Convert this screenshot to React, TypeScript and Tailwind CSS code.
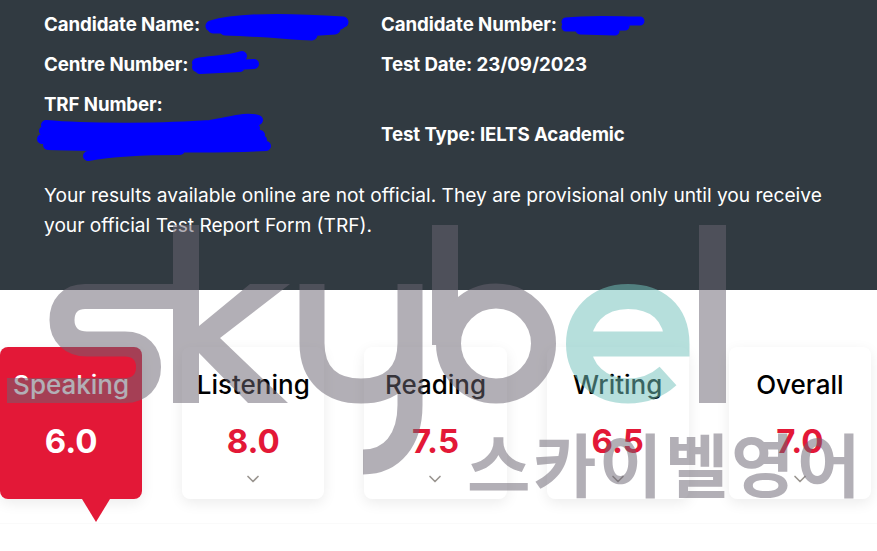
import { ChevronDown } from "lucide-react";

const scores = [
  { label: "Speaking", score: "6.0", active: true },
  { label: "Listening", score: "8.0" },
  { label: "Reading", score: "7.5" },
  { label: "Writing", score: "6.5" },
  { label: "Overall", score: "7.0" },
];

const ScoreCard = ({ label, score, active }: { label: string; score: string; active?: boolean }) => (
  <div
    className={
      active
        ? "relative flex h-[152px] flex-col items-center rounded-lg bg-[#e31837] pt-[20px] text-white shadow-[0_4px_14px_rgba(0,0,0,0.08)]"
        : "relative flex h-[152px] flex-col items-center rounded-lg bg-white pt-[20px] text-black shadow-[0_4px_14px_rgba(0,0,0,0.08)]"
    }
  >
    <div className="h-[36px] text-[26px] leading-[36px] font-medium">{label}</div>
    <div className={active ? "mt-[18px] h-[40px] text-[33px] leading-[40px] font-bold" : "mt-[18px] h-[40px] text-[33px] leading-[40px] font-bold text-[#e31837]"}>
      {score}
    </div>
    {active ? (
      <div className="absolute top-full left-[82px] h-0 w-0 border-x-[14px] border-t-[23px] border-x-transparent border-t-[#e31837]" />
    ) : (
      <ChevronDown className="mt-[8px] h-[20px] w-[20px] text-[#9a9590]" strokeWidth={2} />
    )}
  </div>
);

const Scribbles = () => (
  <svg className="absolute top-0 left-0" width="877" height="170" viewBox="0 0 877 170" fill="none" stroke="#0000ff" strokeLinecap="round" strokeLinejoin="round">
    <path d="M211 26 C240 17 300 19 343 22 M213 28 L340 24 M225 30 C260 31 290 34 312 35 M290 32 L335 29" strokeWidth="11" />
    <path d="M197 63 C210 60 228 61 242 56 M197 67 L254 64 M200 69 L240 67" strokeWidth="10" />
    <path d="M566 22 C590 19 620 21 640 21 M566 27 L625 26 M580 30 L615 31" strokeWidth="9" />
    <path d="M46 125 C90 129 170 128 210 125 C230 122 245 116 258 120 M44 131 L255 128 M42 139 C100 134 200 132 260 135 M48 145 C110 146 200 150 266 146 M88 156 C110 152 140 150 180 150 M60 137 L262 140" strokeWidth="10" />
  </svg>
);

const Watermark = () => (
  <div className="pointer-events-none absolute top-0 left-0 h-[551px] w-[877px] opacity-[0.515]">
    <svg className="absolute top-0 left-0" width="877" height="551" viewBox="0 0 877 551" fill="none">
      <g stroke="#6b6572" strokeWidth="25">
        <path d="M186 296.5 H85 C70 296.5 62 306 62 320 C62 335 72 344 87 344 H125 C140 344 148.5 353 148.5 367 C148.5 381 140 390.5 125 390.5 H7" />
        <path d="M186 225 V403" strokeWidth="26" />
        <path d="M312 284 V343 C312 375 332 391 361 391 C390 391 410 375 410 343 M410 284 V405 C410 440 392 462 363 462" />
        <path d="M445 225 V345" strokeWidth="26" />
        <circle cx="496" cy="343.5" r="47.5" />
        <path d="M712.5 225 V403" strokeWidth="27" />
      </g>
      <polygon points="199,326 250,284 290,284 220,338 288,403 248,403 199,353" fill="#6b6572" />
      <path d="M590 344 H677 C677 312 656 296.5 628 296.5 C597 296.5 578.5 318 578.5 344 C578.5 372 600 391 628 391 C645 391 657 386 668 376" stroke="#72c2bc" strokeWidth="25" />
    </svg>
    <div className="absolute top-[420px] left-[467px] whitespace-nowrap text-[69px] leading-[84px] font-bold tracking-[2.5px] text-[#6b6572] [font-family:'Noto_Sans_CJK_KR',sans-serif]">
      스카이벨영어
    </div>
  </div>
);

export default function App() {
  return (
    <div className="relative h-[551px] w-[877px] overflow-hidden bg-white [font-family:Inter,sans-serif]">
      <header className="h-[290px] bg-[#313a41] pt-[10px] pl-[44px] leading-[30px] text-white">
        <div className="grid grid-cols-[337px_1fr] gap-y-[10px] text-[18.7px] font-bold tracking-[-0.1px]">
          <div>Candidate Name:</div>
          <div>Candidate Number:</div>
          <div>Centre Number:</div>
          <div>Test Date: 23/09/2023</div>
          <div className="h-[60px]">TRF Number:</div>
          <div className="flex h-[60px] items-end">Test Type: IELTS Academic</div>
        </div>
        <p className="mt-[30px] w-[795px] text-[19.15px]">
          Your results available online are not official. They are provisional only until you receive your official Test Report Form (TRF).
        </p>
      </header>
      <section className="h-[234px] border-b border-[#fafafa] pt-[57px] pr-[6px]">
        <div className="grid grid-cols-5 gap-x-[40px]">
          {scores.map((s) => (
            <ScoreCard key={s.label} {...s} />
          ))}
        </div>
      </section>
      <Scribbles />
      <Watermark />
    </div>
  );
}
